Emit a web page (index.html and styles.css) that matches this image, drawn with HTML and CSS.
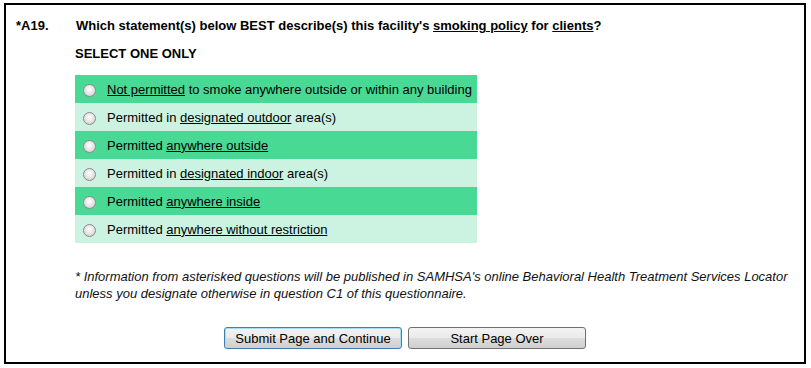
FILE: index.html
```html
<!DOCTYPE html>
<html lang="en">

<head>
    <meta charset="UTF-8">
    <title>A19 Smoking Policy</title>
    <link rel="stylesheet" href="styles.css">
</head>

<body>
    <div class="frame">
        <div class="question">
            <div class="qnum">*A19.</div>
            <div class="qtext">Which statement(s) below BEST describe(s) this facility's <u>smoking policy</u> for <u>clients</u>?</div>
        </div>

        <div class="body">
            <div class="select-one">SELECT ONE ONLY</div>

            <table class="options">
                <tr class="dark">
                    <td class="radio-cell"><span class="radio"></span></td>
                    <td><u>Not permitted</u> to smoke anywhere outside or within any building</td>
                </tr>
                <tr class="light">
                    <td class="radio-cell"><span class="radio"></span></td>
                    <td>Permitted in <u>designated outdoor</u> area(s)</td>
                </tr>
                <tr class="dark">
                    <td class="radio-cell"><span class="radio"></span></td>
                    <td>Permitted <u>anywhere outside</u></td>
                </tr>
                <tr class="light">
                    <td class="radio-cell"><span class="radio"></span></td>
                    <td>Permitted in <u>designated indoor</u> area(s)</td>
                </tr>
                <tr class="dark">
                    <td class="radio-cell"><span class="radio"></span></td>
                    <td>Permitted <u>anywhere inside</u></td>
                </tr>
                <tr class="light">
                    <td class="radio-cell"><span class="radio"></span></td>
                    <td>Permitted <u>anywhere without restriction</u></td>
                </tr>
            </table>

            <p class="note">* Information from asterisked questions will be published in SAMHSA's online Behavioral Health Treatment Services Locator unless you designate otherwise in question C1 of this questionnaire.</p>
        </div>

        <div class="buttons">
            <button class="btn default">Submit Page and Continue</button>
            <button class="btn">Start Page Over</button>
        </div>
    </div>
</body>

</html>
```

FILE: styles.css
```css
body {
    margin: 0;
    font-family: 'Liberation Sans', Arial, sans-serif;
    font-size: 13px;
    color: #000;
    background: #fff;
}

.frame {
    margin: 3px 0 0 4px;
    width: 798px;
    height: 357px;
    border: 2px solid #000;
}

.question {
    display: flex;
    padding: 13px 0 0 10px;
    font-weight: bold;
    line-height: 16px;
}

.qnum {
    width: 60px;
}

.body {
    padding-left: 69px;
}

.select-one {
    font-weight: bold;
    margin-top: 12px;
    line-height: 16px;
}

.options {
    border-collapse: collapse;
    margin-top: 13px;
    width: 402px;
}

.options td {
    height: 28px;
    padding: 0;
    white-space: nowrap;
}

.dark {
    background: #48d995;
}

.light {
    background: #ccf3e1;
}

.options .radio-cell {
    width: 24px;
    padding-left: 8px;
}

.radio {
    display: inline-block;
    width: 11px;
    height: 11px;
    border-radius: 50%;
    border: 1px solid #8a8a8a;
    background: radial-gradient(circle at 50% 40%, #ffffff 0%, #e8e8e8 45%, #c8c8c8 100%);
    vertical-align: middle;
}

.note {
    margin: 25px 0 0 0;
    width: 725px;
    font-size: 13px;
    font-style: italic;
    line-height: 17px;
    color: #111;
}

.buttons {
    display: flex;
    gap: 6px;
    padding-left: 218px;
    margin-top: 25px;
}

.btn {
    width: 178px;
    height: 22px;
    padding: 0;
    font-family: 'Liberation Sans', Arial, sans-serif;
    font-size: 13px;
    color: #000;
    border: 1px solid #707070;
    border-radius: 3px;
    background: linear-gradient(#f2f2f2 0%, #ebebeb 50%, #dddddd 51%, #cfcfcf 100%);
}

.btn.default {
    border-color: #3c7fb1;
    box-shadow: inset 0 0 0 1px #a8dcf5;
}
```
